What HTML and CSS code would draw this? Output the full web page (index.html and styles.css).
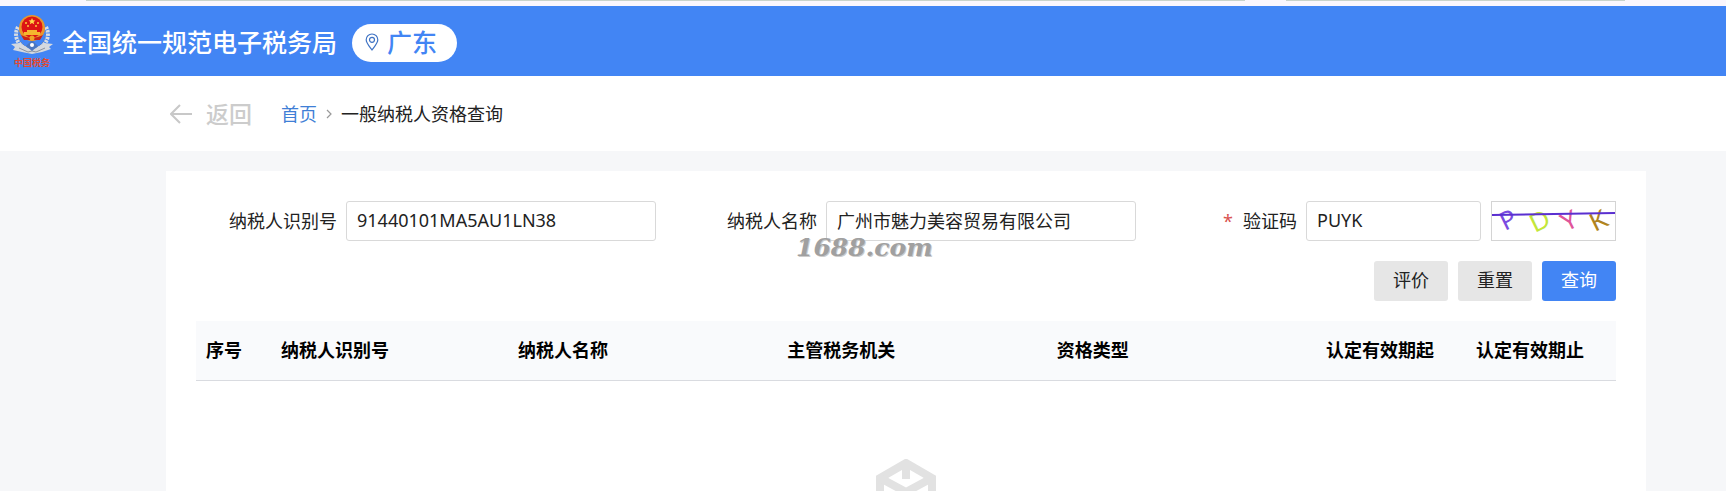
FILE: index.html
```html
<!DOCTYPE html>
<html lang="zh-CN">
<head>
    <meta charset="UTF-8">
    <meta name="viewport" content="width=device-width, initial-scale=1.0">
    <title>一般纳税人资格查询</title>
    <link rel="stylesheet" href="styles.css">
</head>
<body>

<div class="page">
    <div class="top-strip">
        <span class="strip-line strip-long"></span>
        <span class="strip-line strip-short"></span>
    </div>

    <header class="header">
        <div class="logo">
            <svg class="emblem" viewBox="0 0 42 40" aria-hidden="true">
                <!-- wreath -->
                <path d="M7 12C3 19 5 29 15 34M35 12C39 19 37 29 27 34" fill="none" stroke="#d9dde3" stroke-width="4" stroke-dasharray="2.4 1"/>
                <path d="M9 13C6 20 8 28 16 32M33 13C36 20 34 28 26 32" fill="none" stroke="#77808f" stroke-width="1" stroke-dasharray="1 2"/>
                <!-- ribbon -->
                <path d="M0 29L9 28L17 33L21 34L25 33L33 28L42 29L38 32L40 34L31 37L21 39L11 37L2 35L4 32Z" fill="#d5d9df"/>
                <path d="M8 33L17 37L21 36L25 37L34 33" fill="none" stroke="#8b929e" stroke-width="1"/>
                <path d="M21 25L27 31L21 36L15 31Z" fill="#4a76bf"/>
                <circle cx="21" cy="30" r="2" fill="#fff"/>
                <!-- national emblem -->
                <circle cx="21" cy="13" r="13" fill="#e9952c"/>
                <circle cx="21" cy="12" r="10.5" fill="#dc1414"/>
                <path d="M21 3l1 2.200 2.400.2-1.800 1.600.6 2.300-2.200-1.200-2.200 1.200.6-2.300-1.800-1.600 2.400-.2z" fill="#ffd84a"/>
                <circle cx="15" cy="8" r="1" fill="#ffc83a"/>
                <circle cx="27" cy="8" r="1" fill="#ffc83a"/>
                <circle cx="17" cy="11" r="1" fill="#ffc83a"/>
                <circle cx="25" cy="11" r="1" fill="#ffc83a"/>
                <path d="M13 17h3v-2h10v2h3v3H13z" fill="#f5b62e"/>
                <path d="M10 20Q21 26 32 20L29 25H13Z" fill="#c92118"/>
                <circle cx="21" cy="23" r="2.500" fill="#f0a428"/>
            </svg>
            <span class="logo-name">中国税务</span>
        </div>
        <span class="site-title">全国统一规范电子税务局</span>
        <button type="button" class="region">
            <svg class="pin" viewBox="0 0 14 18" aria-hidden="true">
                <path d="M7 17C4 13 1.200 10 1.200 6.800a5.800 5.800 0 0 1 11.600 0C12.800 10 10 13 7 17z"/>
                <circle cx="7" cy="6.800" r="2.500"/>
            </svg>
            广东
        </button>
    </header>

    <nav class="crumbs">
        <a href="#" class="back">
            <svg class="back-arrow" viewBox="0 0 22 22" aria-hidden="true">
                <path d="M22 11H1M10 2L1 11L10 20"/>
            </svg>
            返回
        </a>
        <a href="#" class="home">首页</a>
        <svg class="sep" viewBox="0 0 6 10" aria-hidden="true"><path d="M1 1L5 5L1 9"/></svg>
        <span>一般纳税人资格查询</span>
    </nav>

    <main class="card">
        <form class="search">
            <div class="field">
                <label for="taxId">纳税人识别号</label>
                <input type="text" id="taxId" value="91440101MA5AU1LN38">
            </div>
            <div class="field">
                <label for="taxName">纳税人名称</label>
                <input type="text" id="taxName" value="广州市魅力美容贸易有限公司">
                <span class="watermark">1688.com</span>
            </div>
            <div class="field">
                <label for="captcha"><span class="required">*</span>验证码</label>
                <input type="text" id="captcha" value="PUYK">
                <svg class="captcha" viewBox="0 0 123 38" role="img" aria-label="验证码">
                    <text class="c1" transform="translate(13 29) rotate(-26)">P</text>
                    <text class="c2" transform="translate(43 31) rotate(-26)">D</text>
                    <text class="c3" transform="translate(74 30) rotate(-26)">Y</text>
                    <text class="c4" transform="translate(103 30) rotate(-26)">K</text>
                    <path d="M0 13L123 11"/>
                </svg>
            </div>
            <div class="actions">
                <button type="button" class="btn">评价</button>
                <button type="reset" class="btn">重置</button>
                <button type="button" class="btn primary">查询</button>
            </div>
        </form>

        <table class="result">
            <thead>
                <tr>
                    <th class="col-no">序号</th>
                    <th class="col-id">纳税人识别号</th>
                    <th>纳税人名称</th>
                    <th>主管税务机关</th>
                    <th>资格类型</th>
                    <th class="col-date">认定有效期起</th>
                    <th class="col-date">认定有效期止</th>
                </tr>
            </thead>
        </table>

        <div class="empty">
            <svg class="empty-box" viewBox="0 0 60 68" aria-hidden="true">
                <path d="M30 4L56 19V49L30 64L4 49V19Z"/>
                <path d="M4 19L30 33L56 19M30 33V64M30 4V20"/>
            </svg>
        </div>
    </main>
</div>

</body>
</html>
```
FILE: styles.css
```css
* {
    box-sizing: border-box;
}
body {
    margin: 0;
    font-family: "Noto Sans", "Noto Sans CJK SC", sans-serif;
    font-size: 18px;
    line-height: 24px;
    color: #222;
    background-color: #f6f7f9;
}
input, button {
    font: inherit;
    color: inherit;
}
a {
    text-decoration: none;
}
.page {
    display: flex;
    flex-direction: column;
    height: 100vh;
    overflow: hidden;
}
.top-strip {
    display: flex;
    flex: none;
    gap: 41px;
    height: 6px;
    padding: 0 101px 0 86px;
    background-color: #faf6fd;
}
.strip-line {
    height: 1px;
    background-color: #c9d3cb;
}
.strip-long {
    flex: 1159;
}
.strip-short {
    flex: 339;
}

/* header */
.header {
    display: flex;
    flex: none;
    align-items: center;
    height: 70px;
    padding: 3px 0 0 11px;
    background-color: #4285f4;
}
.logo {
    display: flex;
    flex-direction: column;
    align-items: center;
    gap: 2px;
    width: 42px;
    margin-right: 9px;
    padding-bottom: 2px;
}
.emblem {
    width: 42px;
    height: 40px;
}
.logo-name {
    font-size: 9px;
    line-height: 12px;
    font-weight: bold;
    color: #e2492f;
    white-space: nowrap;
}
.site-title {
    padding-bottom: 2px;
    font-size: 25px;
    line-height: 36px;
    font-weight: 500;
    color: #fff;
}
.region {
    display: flex;
    align-items: center;
    gap: 8px;
    height: 38px;
    margin-left: 15px;
    padding: 0 20px 2px 13px;
    border: none;
    border-radius: 19px;
    font-size: 25px;
    line-height: 36px;
    font-weight: 500;
    color: #4285f4;
    background-color: #fff;
}
.pin {
    width: 14px;
    height: 18px;
    fill: none;
    stroke: #3f73c4;
    stroke-width: 1.2;
}

/* breadcrumb */
.crumbs {
    display: flex;
    flex: none;
    align-items: center;
    height: 75px;
    padding-left: 170px;
    background-color: #fff;
}
.back {
    display: flex;
    align-items: center;
    gap: 14px;
    margin-right: 29px;
    font-size: 23px;
    font-weight: 500;
    color: #ccc;
}
.back-arrow {
    width: 22px;
    height: 22px;
    fill: none;
    stroke: #c8c8c8;
    stroke-width: 2;
}
.home {
    color: #3f7fd6;
}
.sep {
    width: 6px;
    height: 10px;
    margin: 0 9px;
    fill: none;
    stroke: #999;
    stroke-width: 1.2;
}

/* query card */
.card {
    flex: 1;
    margin: 20px 80px 0 166px;
    padding: 30px 30px 0;
    background-color: #fff;
}
.search {
    display: grid;
    grid-template-columns: repeat(3, minmax(0, 1fr));
    gap: 20px;
}
.field {
    display: flex;
    align-items: center;
    position: relative;
}
.field label {
    flex: none;
    width: 150px;
    padding-right: 9px;
    text-align: right;
}
.required {
    margin-right: 10px;
    color: #d9534f;
}
.field input {
    flex: 1;
    min-width: 0;
    height: 40px;
    padding: 0 10px 2px;
    border: 1px solid #d9d9d9;
    border-radius: 3px;
    background-color: #fff;
}
.watermark {
    position: absolute;
    left: 120px;
    top: 32px;
    font-family: "DejaVu Serif", serif;
    font-size: 25px;
    line-height: 30px;
    font-weight: bold;
    font-style: italic;
    color: #a0a0a0;
    text-shadow: 1px 1px 0 #ccc;
    pointer-events: none;
}
.captcha {
    flex: none;
    width: 125px;
    height: 40px;
    margin-left: 10px;
    border: 1px solid #d4d4d4;
    font-family: Lato, sans-serif;
    font-size: 25px;
}
.captcha path {
    fill: none;
    stroke: #5a2fd0;
    stroke-width: 2;
}
.c1 {
    fill: #7a4be0;
}
.c2 {
    fill: #c3e63a;
}
.c3 {
    fill: #e0559a;
}
.c4 {
    fill: #b08420;
}
.actions {
    display: flex;
    grid-column: 1 / -1;
    justify-content: flex-end;
    gap: 10px;
}
.btn {
    width: 74px;
    height: 40px;
    padding: 0 0 2px;
    border: none;
    border-radius: 3px;
    background-color: #e6e6e6;
    cursor: pointer;
}
.btn.primary {
    color: #fff;
    background-color: #4285f4;
}

/* result table */
.result {
    width: 100%;
    margin-top: 20px;
    table-layout: fixed;
    border-collapse: collapse;
}
.result th {
    height: 59px;
    padding: 0 10px;
    border-bottom: 1px solid #d9dbe0;
    font-weight: bold;
    text-align: left;
    white-space: nowrap;
    color: #000;
    background-color: #f9fafc;
}
.result .col-no {
    width: 75px;
}
.result .col-id {
    width: 237px;
}
.result .col-date {
    width: 150px;
}
.empty {
    display: flex;
    justify-content: center;
    padding-top: 78px;
}
.empty-box {
    width: 60px;
    height: 68px;
    fill: none;
    stroke: #e2e2e2;
    stroke-width: 8;
}
```
